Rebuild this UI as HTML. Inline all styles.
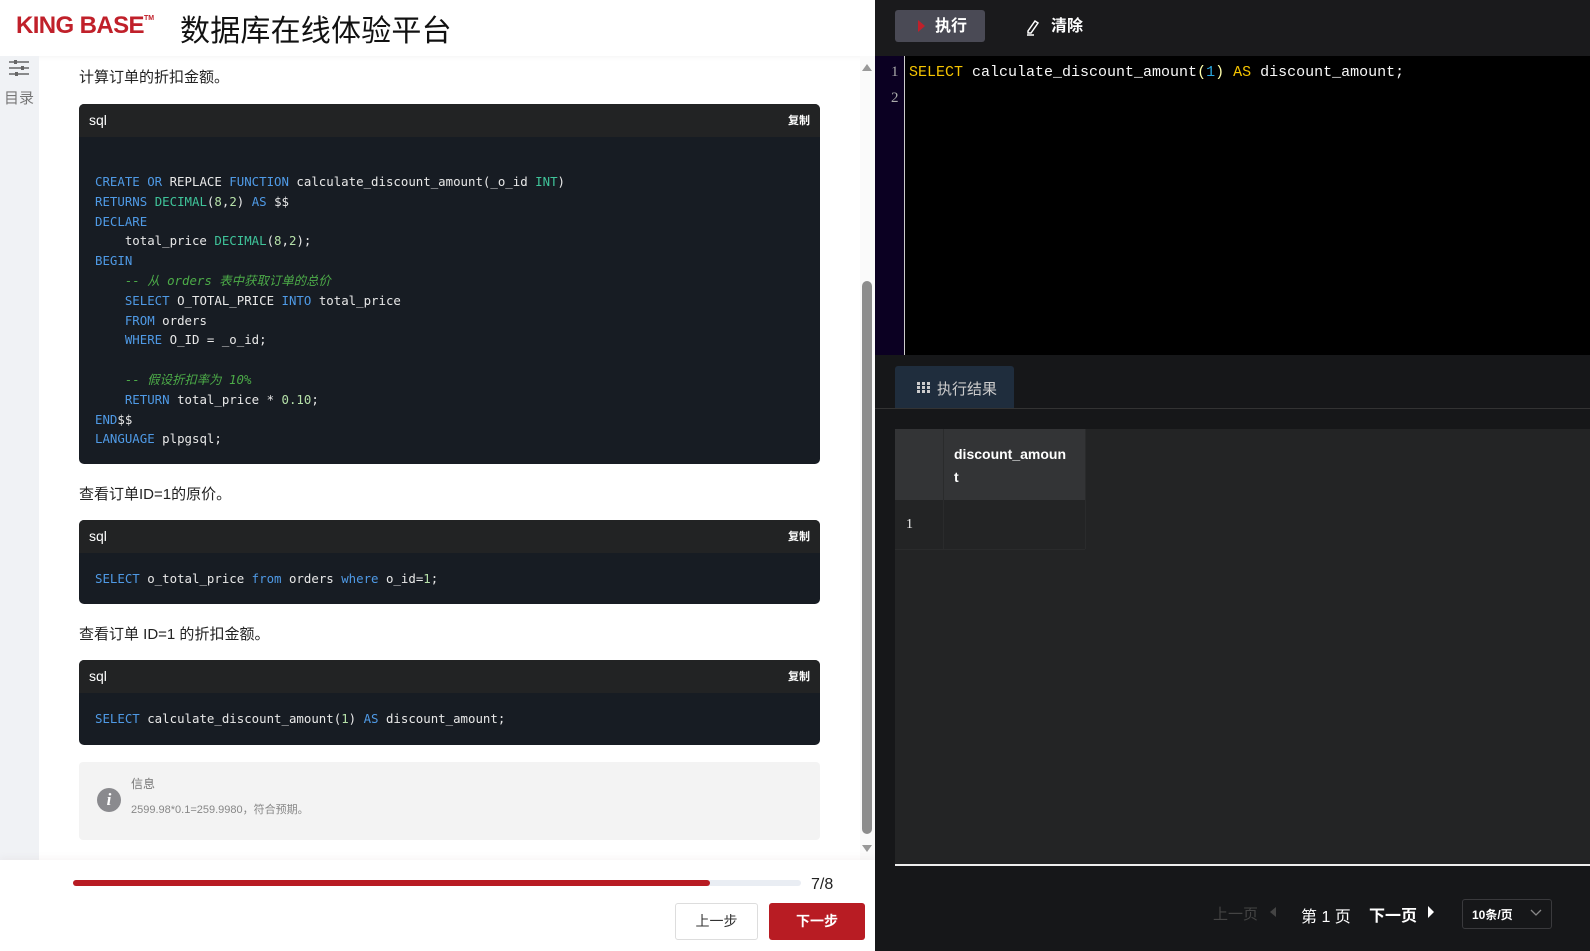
<!DOCTYPE html>
<html><head><meta charset="utf-8"><style>
*{margin:0;padding:0;box-sizing:border-box}
body{width:1590px;height:951px;overflow:hidden;background:#fff;font-family:"Liberation Sans","Noto Sans CJK SC",sans-serif;position:relative}
.abs{position:absolute}
.code{position:absolute;left:79px;width:741px;background:#171c23;border-radius:5px;overflow:hidden}
.code .hd{height:33px;background:#222324;color:#fff;font-size:14px;padding:8px 0 0 10px;position:relative}
.code .hd span{position:absolute;right:10px;top:8px;font-size:11px;font-weight:bold}
.code pre{font-family:"DejaVu Sans Mono","Liberation Mono",monospace;font-size:12.4px;line-height:19.8px;color:#e8e8e8;padding-left:16px}
.k{color:#4f9ae6}.t{color:#3fc49a}.n{color:#b5e0a8}.c{color:#4cab48;font-style:italic}
p.txt{position:absolute;left:79px;font-size:15px;color:#222}
</style></head><body>
<div class="abs" style="left:0;top:0;width:875px;height:56px;background:#fff;box-shadow:0 2px 4px rgba(0,0,0,0.04)"></div>
<div class="abs" style="left:16px;top:12px;font-size:24px;font-weight:bold;color:#c0202a;letter-spacing:-0.6px">KING BASE<sup style="font-size:7px;vertical-align:13px;letter-spacing:0">TM</sup></div>
<div class="abs" style="left:180px;top:6px;font-size:30px;color:#111;letter-spacing:0.2px">数据库在线体验平台</div>
<div class="abs" style="left:0;top:56px;width:39px;height:804px;background:#f0f2f5"></div>
<svg class="abs" style="left:8px;top:58px" width="22" height="20" viewBox="0 0 22 20"><g stroke="#666" stroke-width="1.5"><line x1="1" y1="4" x2="21" y2="4"/><line x1="1" y1="10" x2="21" y2="10"/><line x1="1" y1="16" x2="21" y2="16"/></g><g fill="#666"><rect x="6" y="2" width="3" height="4"/><rect x="13" y="8" width="3" height="4"/><rect x="7" y="14" width="3" height="4"/></g></svg>
<div class="abs" style="left:4px;top:87px;font-size:15px;color:#777">目录</div>
<p class="txt" style="top:66px">计算订单的折扣金额。</p>
<div class="code" style="top:104px;height:360px"><div class="hd">sql<span>复制</span></div>
<pre style="padding-top:35px"><span class="k">CREATE OR</span> REPLACE <span class="k">FUNCTION</span> calculate_discount_amount(_o_id <span class="t">INT</span>)
<span class="k">RETURNS</span> <span class="t">DECIMAL</span>(<span class="n">8</span>,<span class="n">2</span>) <span class="k">AS</span> $$
<span class="k">DECLARE</span>
    total_price <span class="t">DECIMAL</span>(<span class="n">8</span>,<span class="n">2</span>);
<span class="k">BEGIN</span>
    <span class="c">-- 从 orders 表中获取订单的总价</span>
    <span class="k">SELECT</span> O_TOTAL_PRICE <span class="k">INTO</span> total_price
    <span class="k">FROM</span> orders
    <span class="k">WHERE</span> O_ID = _o_id;

    <span class="c">-- 假设折扣率为 10%</span>
    <span class="k">RETURN</span> total_price * <span class="n">0.10</span>;
<span class="k">END</span>$$
<span class="k">LANGUAGE</span> plpgsql;</pre></div>
<p class="txt" style="top:483px">查看订单ID=1的原价。</p>
<div class="code" style="top:520px;height:84px"><div class="hd">sql<span>复制</span></div>
<pre style="padding-top:16px"><span class="k">SELECT</span> o_total_price <span class="k">from</span> orders <span class="k">where</span> o_id=<span class="n">1</span>;</pre></div>
<p class="txt" style="top:623px">查看订单 ID=1 的折扣金额。</p>
<div class="code" style="top:660px;height:85px"><div class="hd">sql<span>复制</span></div>
<pre style="padding-top:16px"><span class="k">SELECT</span> calculate_discount_amount(<span class="n">1</span>) <span class="k">AS</span> discount_amount;</pre></div>
<div class="abs" style="left:79px;top:762px;width:741px;height:78px;background:#f3f3f3;border-radius:4px"></div>
<div class="abs" style="left:97px;top:788px;width:24px;height:24px;border-radius:50%;background:#8a8a8e;color:#fff;font:italic bold 17px 'Liberation Serif',serif;text-align:center;line-height:24px">i</div>
<div class="abs" style="left:131px;top:775px;font-size:12px;color:#777">信息</div>
<div class="abs" style="left:131px;top:801px;font-size:11px;color:#888">2599.98*0.1=259.9980，符合预期。</div>
<div class="abs" style="left:860px;top:56px;width:15px;height:804px;background:#fafafa"></div>
<div class="abs" style="left:862px;top:64px;width:0;height:0;border-left:5px solid transparent;border-right:5px solid transparent;border-bottom:7px solid #999"></div>
<div class="abs" style="left:862px;top:281px;width:10px;height:553px;background:#8d8d8d;border-radius:5px"></div>
<div class="abs" style="left:862px;top:845px;width:0;height:0;border-left:5px solid transparent;border-right:5px solid transparent;border-top:7px solid #999"></div>
<div class="abs" style="left:0;top:860px;width:875px;height:91px;background:#fff;box-shadow:0 -3px 6px rgba(180,150,150,0.08)"></div>
<div class="abs" style="left:73px;top:880px;width:728px;height:6px;background:#e9edf3;border-radius:3px"></div>
<div class="abs" style="left:73px;top:880px;width:637px;height:6px;background:#b81c23;border-radius:3px"></div>
<div class="abs" style="left:811px;top:876px;font-size:16px;color:#222">7/8</div>
<div class="abs" style="left:675px;top:903px;width:83px;height:37px;border:1px solid #ddd;border-radius:3px;font-size:14px;color:#333;text-align:center;line-height:35px">上一步</div>
<div class="abs" style="left:769px;top:903px;width:96px;height:37px;background:#b81c23;border-radius:3px;font-size:14px;color:#fff;text-align:center;line-height:37px;font-weight:bold">下一步</div>
<div class="abs" style="left:875px;top:0;width:715px;height:951px;background:#161719"></div>
<div class="abs" style="left:875px;top:0;width:715px;height:56px;background:#1a1a1c"></div>
<div class="abs" style="left:895px;top:10px;width:90px;height:32px;background:#4a4a55;border-radius:3px"></div>
<div class="abs" style="left:918px;top:20px;width:0;height:0;border-top:6px solid transparent;border-bottom:6px solid transparent;border-left:7px solid #c0202a"></div>
<div class="abs" style="left:935px;top:17px;font-size:16px;line-height:20px;color:#fff;font-weight:bold">执行</div>
<svg class="abs" style="left:1025px;top:18px" width="16" height="18" viewBox="0 0 16 18"><path d="M3 13 L10 3 L13 5 L6 15 L3 15 Z M2 17 H9" stroke="#fff" stroke-width="1.5" fill="none"/></svg>
<div class="abs" style="left:1051px;top:17px;font-size:16px;line-height:20px;color:#fff;font-weight:bold">清除</div>
<div class="abs" style="left:875px;top:56px;width:715px;height:299px;background:#000"></div>
<div class="abs" style="left:875px;top:56px;width:30px;height:299px;background:#0b0022;border-right:1px solid #ccc"></div>
<div class="abs" style="left:891px;top:64px;font:15px 'Liberation Serif',serif;color:#aaa">1</div>
<div class="abs" style="left:891px;top:90px;font:15px 'Liberation Serif',serif;color:#aaa">2</div>
<div class="abs" style="left:909px;top:64px;font:15px 'Liberation Mono',monospace;color:#f8f8f8;white-space:pre"><span style="color:#f5c400">SELECT</span> calculate_discount_amount<span style="color:#ffa">(</span><span style="color:#2aa7e0">1</span><span style="color:#ffa">)</span> <span style="color:#f5c400">AS</span> discount_amount;</div>
<div class="abs" style="left:895px;top:366px;width:119px;height:42px;background:#1f2d3d;border-radius:3px 3px 0 0"></div>
<svg class="abs" style="left:917px;top:382px" width="13" height="11"><g fill="#ccc"><rect x="0" y="0" width="3" height="3"/><rect x="5" y="0" width="3" height="3"/><rect x="10" y="0" width="3" height="3"/><rect x="0" y="4" width="3" height="3"/><rect x="5" y="4" width="3" height="3"/><rect x="10" y="4" width="3" height="3"/><rect x="0" y="8" width="3" height="3"/><rect x="5" y="8" width="3" height="3"/><rect x="10" y="8" width="3" height="3"/></g></svg>
<div class="abs" style="left:937px;top:378px;font-size:15px;color:#ccc">执行结果</div>
<div class="abs" style="left:875px;top:408px;width:715px;height:1px;background:#333"></div>
<div class="abs" style="left:895px;top:429px;width:695px;height:436px;background:#232425"></div>
<div class="abs" style="left:895px;top:429px;width:190px;height:71px;background:#333436"></div>
<div class="abs" style="left:943px;top:429px;width:1px;height:120px;background:#2a2b2c"></div>
<div class="abs" style="left:1085px;top:429px;width:1px;height:120px;background:#2a2b2c"></div>
<div class="abs" style="left:895px;top:549px;width:190px;height:1px;background:#2a2b2c"></div>
<div class="abs" style="left:954px;top:443px;font-size:14px;color:#fff;font-weight:bold;line-height:23px;width:120px;word-break:break-all">discount_amoun t</div>
<div class="abs" style="left:906px;top:517px;font:14px 'Liberation Serif',serif;color:#eee">1</div>
<div class="abs" style="left:895px;top:864px;width:695px;height:2px;background:#eee"></div>
<div class="abs" style="left:1213px;top:903px;font-size:15px;color:#444">上一页</div>
<div class="abs" style="left:1270px;top:907px;width:0;height:0;border-top:5px solid transparent;border-bottom:5px solid transparent;border-right:6px solid #444"></div>
<div class="abs" style="left:1301px;top:903px;font-size:16px;color:#fff">第 1 页</div>
<div class="abs" style="left:1369px;top:902px;font-size:16px;color:#fff;font-weight:bold">下一页</div>
<div class="abs" style="left:1428px;top:906px;width:0;height:0;border-top:6px solid transparent;border-bottom:6px solid transparent;border-left:6px solid #fff"></div>
<div class="abs" style="left:1462px;top:899px;width:90px;height:30px;border:1px solid #3a3a3d;border-radius:3px"></div>
<div class="abs" style="left:1472px;top:906px;font-size:12px;color:#fff;font-weight:bold">10条/页</div>
<svg class="abs" style="left:1530px;top:909px" width="12" height="8"><path d="M1 1 L6 6 L11 1" stroke="#888" stroke-width="1.3" fill="none"/></svg>
</body></html>
